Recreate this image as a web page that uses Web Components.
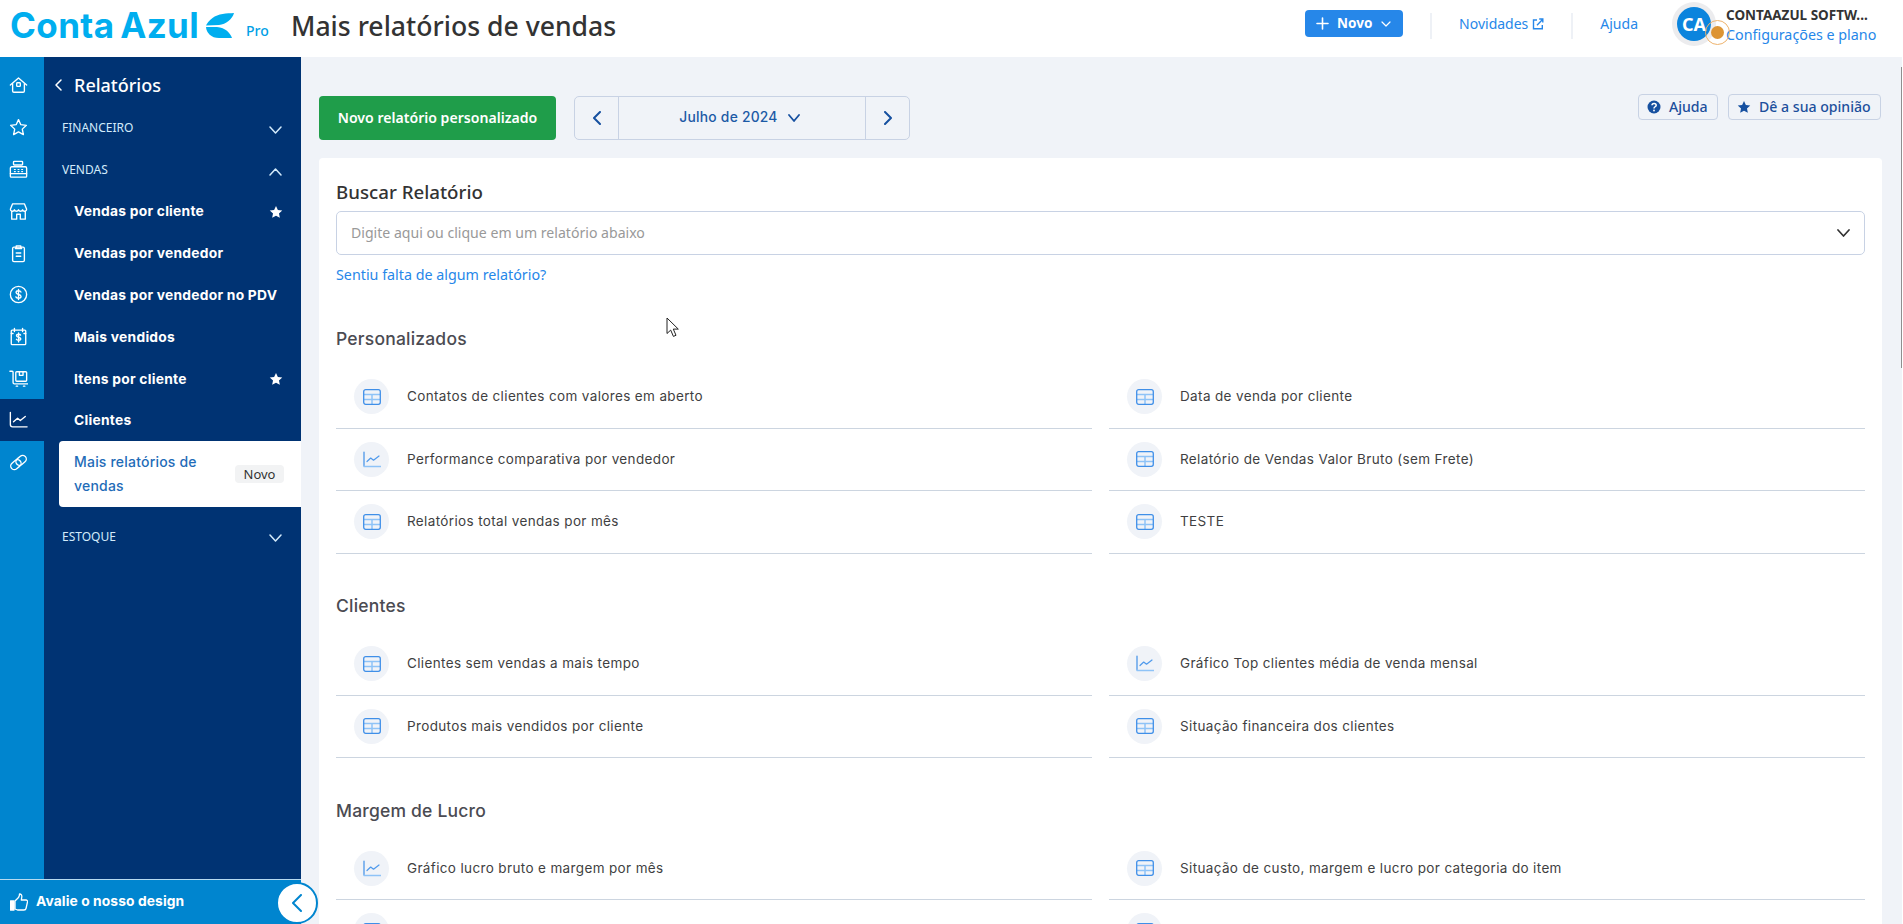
<!DOCTYPE html>
<html lang="pt-BR">
<head>
<meta charset="utf-8">
<title>Mais relatórios de vendas</title>
<style>
html,body{margin:0;padding:0;height:924px;overflow:hidden;background:#fff}
</style>
</head>
<body>
<ca-app>
  <ca-header slot="header"></ca-header>
  <ca-nav slot="nav"></ca-nav>
  <ca-main slot="main">
    <ca-report-section heading="Personalizados">
      <ca-report-item icon="table">Contatos de clientes com valores em aberto</ca-report-item>
      <ca-report-item icon="table">Data de venda por cliente</ca-report-item>
      <ca-report-item icon="chart">Performance comparativa por vendedor</ca-report-item>
      <ca-report-item icon="table">Relatório de Vendas Valor Bruto (sem Frete)</ca-report-item>
      <ca-report-item icon="table">Relatórios total vendas por mês</ca-report-item>
      <ca-report-item icon="table">TESTE</ca-report-item>
    </ca-report-section>
    <ca-report-section heading="Clientes">
      <ca-report-item icon="table">Clientes sem vendas a mais tempo</ca-report-item>
      <ca-report-item icon="chart">Gráfico Top clientes média de venda mensal</ca-report-item>
      <ca-report-item icon="table">Produtos mais vendidos por cliente</ca-report-item>
      <ca-report-item icon="table">Situação financeira dos clientes</ca-report-item>
    </ca-report-section>
    <ca-report-section heading="Margem de Lucro">
      <ca-report-item icon="chart">Gráfico lucro bruto e margem por mês</ca-report-item>
      <ca-report-item icon="table">Situação de custo, margem e lucro por categoria do item</ca-report-item>
      <ca-report-item icon="table"></ca-report-item>
      <ca-report-item icon="table"></ca-report-item>
    </ca-report-section>
  </ca-main>
</ca-app>
<script>
const UI = '"Noto Sans","Open Sans",sans-serif';
const GEO = 'Inter,"Open Sans",sans-serif';
const chev = (d, c, w=2, sz='12 7') => {
  const [a,b] = sz.split(' ');
  const paths = {down:`M1 1l${a/2-1} ${b-2}l${a/2-1} -${b-2}`, up:`M1 ${b-1}l${a/2-1} -${b-2}l${a/2-1} ${b-2}`};
  return `<svg width="${a}" height="${b}" viewBox="0 0 ${a} ${b}" fill="none" stroke="${c}" stroke-width="${w}" stroke-linecap="round" stroke-linejoin="round"><path d="${paths[d]}"/></svg>`;
};
const side = (d, c, w, h, sw=2) => `<svg width="${w}" height="${h}" viewBox="0 0 ${w} ${h}" fill="none" stroke="${c}" stroke-width="${sw}" stroke-linecap="round" stroke-linejoin="round"><path d="${d==='l'?`M${w-1} 1L1 ${h/2}L${w-1} ${h-1}`:`M1 1L${w-1} ${h/2}L1 ${h-1}`}"/></svg>`;
const star = (c,s) => `<svg width="${s}" height="${s}" viewBox="0 0 24 24" fill="${c}"><path d="M12 1.6l3.2 6.9 7.5.9-5.6 5.1 1.5 7.5L12 18.3 5.4 22l1.5-7.5L1.3 9.4l7.5-.9z"/></svg>`;
const railIcons = {
  home:'<path d="M1.500 10L10.500 2.200 19.500 10"/><path d="M4 8.500V16.500a1.500 1.500 0 0 0 1.500 1.500h10a1.500 1.500 0 0 0 1.500-1.500V8.500"/><rect x="8.500" y="7.500" width="4" height="4" rx=".8"/>',
  star:'<path d="M10.500 1.800l2.600 5.600 6.100.7-4.500 4.200 1.200 6.100-5.400-3-5.400 3 1.200-6.100L1.800 8.100l6.100-.7z"/>',
  register:'<rect x="5" y="1.500" width="10" height="4" rx=".8"/><path d="M3 7.500h15a1.500 1.500 0 0 1 1.500 1.500v6H1.500V9A1.500 1.500 0 0 1 3 7.500z"/><path d="M1.500 15v3a1 1 0 0 0 1 1h16a1 1 0 0 0 1-1v-3"/><path d="M6 10.500h1M10 10.500h1M14 10.500h1M6 12.800h1M10 12.800h1M14 12.800h1" stroke-width="1.300"/>',
  store:'<path d="M4 2h13l2.500 6a2.300 2.300 0 0 1-4.500.6 2.400 2.400 0 0 1-4.500 0 2.400 2.400 0 0 1-4.500 0A2.300 2.300 0 0 1 1.500 8z"/><path d="M3 10.500V19h5.500v-5.500h4V19H18v-8.500"/>',
  clip:'<rect x="4" y="3.500" width="13" height="16" rx="1.500"/><path d="M8 3.500V2h5v1.500l1 1.500H7z"/><path d="M8 10h5M8 13.500h5"/>',
  dollar:'<circle cx="10.500" cy="10.500" r="9"/><path d="M13.200 7.800c-.5-1-1.500-1.400-2.700-1.400-1.500 0-2.700.8-2.700 2 0 2.800 5.500 1.400 5.500 4.200 0 1.200-1.200 2-2.800 2-1.300 0-2.400-.5-2.900-1.500M10.500 5v11"/>',
  calendar:'<rect x="2.500" y="3.500" width="16" height="16" rx="1"/><path d="M6 1.500v3.500M15 1.500v3.500M2.500 7.200h2M16.500 7.200h2"/><path d="M12.800 9c-.4-.7-1.200-1-2.200-1-1.300 0-2.300.6-2.300 1.600 0 2.300 4.700 1.200 4.700 3.500 0 1-1 1.700-2.400 1.700-1.100 0-2-.4-2.400-1.200M10.600 6.500V16.500"/>',
  cart:'<path d="M1 2.500h2.500a1 1 0 0 1 1 1V15a1.500 1.500 0 0 0 1.500 1.500h14.500"/><rect x="7.500" y="3" width="12" height="10.500" rx="1"/><path d="M11.500 3v4h4V3"/><path d="M8 19h1.500M16 19h1.500"/>',
  chart:'<path d="M1.500 1.500V15a2.500 2.500 0 0 0 2.500 2.500h16"/><path d="M5 12l4.500-4 3 2.500L18 6"/>',
  link:'<g transform="rotate(-40 10.500 10.500)"><rect x="0.500" y="6.500" width="12.500" height="8" rx="4"/><rect x="8" y="6.500" width="12.500" height="8" rx="4"/></g>'
};
function def(name, css, html){
  class C extends HTMLElement{
    constructor(){
      super();
      this.attachShadow({mode:'open'});
      if(typeof html!=='function') this.shadowRoot.innerHTML = `<style>${css}</style>` + html;
    }
    connectedCallback(){ if(typeof html==='function'){ this.shadowRoot.innerHTML = `<style>${css}</style>` + html(this); } }
  }
  customElements.define(name,C);
}

def('ca-app', `
  :host{display:grid;grid-template-columns:301px 1fr;grid-template-rows:57px 867px;width:1903px;height:924px;position:relative;overflow:hidden;background:#fff}
  ::slotted([slot=header]){grid-column:1/3}
  .cursor{position:absolute;left:666px;top:317px;z-index:5}
`,`<slot name="header"></slot><slot name="nav"></slot><slot name="main"></slot>
<svg class="cursor" width="14" height="21" viewBox="0 0 14 21"><path d="M1 1v15.500l3.700-3.400 2.700 6.300 2.600-1.100-2.700-6.200h5z" fill="#fff" stroke="#222" stroke-width="1"/></svg>`);

def('ca-logo', `
  :host{display:flex;align-items:flex-start;width:268px;height:57px;padding-left:10px;box-sizing:border-box;flex:none;color:#00aeef}
  .word{font:700 35px/1 ${GEO};letter-spacing:.4px;word-spacing:-3px;margin-top:8px;white-space:pre;width:185px;flex:none}
  svg{margin:13px 0 0 11px;flex:none}
  .pro{font:500 14px/1 ${UI};margin:24px 0 0 12px;color:#00a0e6}
`,`<span class="word">Conta Azul</span>
<svg width="28" height="25" viewBox="0 0 28 25" fill="#00aeef"><path d="M28 0C21 .5 12 .5 6.500 5 3 7.800 .8 10.500 0 12.500L13 12C20 11.500 26.500 6 28 0z"/><path d="M0 14C.5 20 5 25 13 25L26 25C24 20 19.500 14.500 11 14z"/></svg>
<span class="pro">Pro</span>`);

def('ca-header', `
  :host{display:flex;align-items:center;height:57px;background:#fff;font-family:${UI}}
  h1{font:500 26.600px/1 ${UI};color:#333;margin:-5px 0 0 23px;white-space:nowrap}
  .right{margin-left:auto;display:flex;align-items:center;padding-right:22px}
  .novo{display:flex;align-items:center;width:98px;height:27px;box-sizing:border-box;background:#2687e9;border-radius:4px;color:#fff;font:700 13.500px/1 ${UI};padding-left:11px;margin-top:-10px}
  .novo .t{margin-left:8px}
  .novo svg:last-child{margin-left:9px}
  .sep{width:2px;height:26px;background:#eef1f6;margin:0 27px;flex:none;margin-top:-6px}
  .lnk{font:400 14px/1 ${UI};color:#2687e9;display:flex;align-items:center;gap:4px;white-space:nowrap;margin-top:-9px}
  .av{position:relative;width:44px;height:44px;border-radius:50%;background:#ececee;display:flex;align-items:center;justify-content:center;margin-left:34px;flex:none;margin-top:-9px}
  .av b{width:34px;height:34px;border-radius:50%;background:#0b84dd;color:#fff;font:700 18px/34px ${UI};text-align:center;display:block}
  .dot{position:absolute;left:39px;top:24px;width:13px;height:13px;border-radius:50%;background:#dd9433}
  .dot::after{content:"";position:absolute;left:-6px;top:-6px;width:25px;height:25px;border:1px solid #eeb36d;border-radius:50%;box-sizing:border-box}
  .who{width:155px;margin-left:10px;flex:none;margin-top:-8px}
  .who .n{font:700 13.500px/18px ${UI};color:#333;white-space:nowrap}
  .who .c{font:400 14.300px/18px ${UI};color:#2687e9;white-space:nowrap;margin-top:2px}
`,`<ca-logo></ca-logo><h1>Mais relatórios de vendas</h1>
<div class="right">
  <div class="novo"><svg width="13" height="13" viewBox="0 0 13 13" stroke="#fff" stroke-width="1.600" stroke-linecap="round"><path d="M6.500 1v11M1 6.500h11"/></svg><span class="t">Novo</span>${chev('down','#fff',1.2,'10 6')}</div>
  <div class="sep"></div>
  <div class="lnk">Novidades<svg width="12" height="12" viewBox="0 0 12 12" fill="none" stroke="#2687e9" stroke-width="1.400"><path d="M5 2H1.500v8.800h8.800V7"/><path d="M5 7.200L10.800 1.200M7.200 1h3.600v3.600"/></svg></div>
  <div class="sep"></div>
  <div class="lnk">Ajuda</div>
  <div class="av"><b>CA</b><span class="dot"></span></div>
  <div class="who"><div class="n">CONTAAZUL SOFTW...</div><div class="c">Configurações e plano</div></div>
</div>`);

def('ca-rail-item', `
  :host{display:flex;align-items:center;height:41.800px;width:44px;padding-left:8.500px;box-sizing:border-box}
  :host([active]){background:#003373}
  svg{display:block}
`, (el)=>`<svg width="19" height="19" viewBox="0 0 21 21" fill="none" stroke="#fff" stroke-width="1.500" stroke-linecap="round" stroke-linejoin="round">${railIcons[el.getAttribute('icon')]||''}</svg>`);

def('ca-rail', `
  :host{display:block;width:44px;flex:none;background:#0085cf;padding-top:8px;box-sizing:border-box}
`,`<slot></slot>`);

def('ca-side-group', `
  :host{display:flex;align-items:center;justify-content:space-between;height:41.800px;box-sizing:border-box;padding:2px 19px 0 18px;font:400 12px/1 ${UI};color:#d3ebfb}
  svg{margin-top:3px}
`, (el)=>`<slot></slot>${chev(el.hasAttribute('open')?'up':'down','#d3ebfb',1.500,'13 8')}`);

def('ca-side-item', `
  :host{display:flex;align-items:center;justify-content:space-between;height:41.800px;box-sizing:border-box;padding:2.500px 18px 0 30px;font:700 13.800px/1 ${GEO};color:#fff;white-space:nowrap;letter-spacing:.25px}
`, (el)=>`<span><slot></slot></span>${el.hasAttribute('star')?star('#fff',14):''}`);

def('ca-side-current', `
  :host{display:flex;align-items:center;justify-content:space-between;margin-left:15px;height:66px;background:#fff;border-radius:4px 0 0 4px;padding:0 17px 0 15px;box-sizing:border-box;font:500 14px/24px ${GEO};color:#1f6cb8;letter-spacing:.2px}
  .txt{width:150px}
  .tag{background:#f2f3f4;border-radius:4px;color:#333;font:400 13px/18px ${UI};width:49px;text-align:center;letter-spacing:0;flex:none}
`,`<span class="txt"><slot></slot></span><span class="tag">Novo</span>`);

def('ca-nav', `
  :host{display:flex;position:relative;height:867px;width:301px;z-index:3}
  .sub{flex:1;background:#003373;padding-top:7px;box-sizing:border-box}
  .back{display:flex;align-items:center;height:42.500px;padding-left:11px;font:500 18px/1 ${UI};color:#fff;margin-top:0}
  .back svg{margin-right:12px}
  ca-side-group[last]{margin-top:8px}
  .foot{position:absolute;left:0;bottom:0;width:301px;height:45px;box-sizing:border-box;background:#0085cf;border-top:1px solid #b6daf0;display:flex;align-items:center;padding-left:10px;gap:8px;color:#fff;font:700 13.800px/1 ${GEO};letter-spacing:.1px}
  .round{position:absolute;right:-17px;bottom:0;width:42px;height:42px;box-sizing:border-box;border-radius:50%;background:#fff;border:2px solid #0085cf;display:flex;align-items:center;justify-content:center}
`,`<ca-rail>
  <ca-rail-item icon="home"></ca-rail-item>
  <ca-rail-item icon="star"></ca-rail-item>
  <ca-rail-item icon="register"></ca-rail-item>
  <ca-rail-item icon="store"></ca-rail-item>
  <ca-rail-item icon="clip"></ca-rail-item>
  <ca-rail-item icon="dollar"></ca-rail-item>
  <ca-rail-item icon="calendar"></ca-rail-item>
  <ca-rail-item icon="cart"></ca-rail-item>
  <ca-rail-item icon="chart" active></ca-rail-item>
  <ca-rail-item icon="link"></ca-rail-item>
</ca-rail>
<div class="sub">
  <div class="back">${side('l','#fff',7,12,1.500)}Relatórios</div>
  <ca-side-group>FINANCEIRO</ca-side-group>
  <ca-side-group open>VENDAS</ca-side-group>
  <ca-side-item star>Vendas por cliente</ca-side-item>
  <ca-side-item>Vendas por vendedor</ca-side-item>
  <ca-side-item>Vendas por vendedor no PDV</ca-side-item>
  <ca-side-item>Mais vendidos</ca-side-item>
  <ca-side-item star>Itens por cliente</ca-side-item>
  <ca-side-item>Clientes</ca-side-item>
  <ca-side-current>Mais relatórios de vendas</ca-side-current>
  <ca-side-group last>ESTOQUE</ca-side-group>
</div>
<div class="foot">
  <svg width="18" height="18" viewBox="0 0 18 18" fill="none" stroke="#fff" stroke-width="1.300" stroke-linejoin="round"><path d="M0.500 8h3.500v9H0.500z" fill="#fff"/><path d="M5 8l3.500-3.500c.8-1 1-2.500 1-3.500 1.800 0 2.500 1.500 2.300 3L11.300 7H16c1 0 1.800 1 1.500 2l-1.500 6.500c-.2 1-1 1.500-2 1.500H7.500L5 16z"/></svg>
  <span>Avalie o nosso design</span>
  <div class="round">${side('l','#0085cf',10,18,2)}</div>
</div>`);

def('ca-toolbar', `
  :host{display:flex;align-items:flex-start;height:44px;font-family:${UI}}
  .green{width:237px;height:44px;border-radius:4px;background:#1f9d4a;color:#fff;font:600 14.100px/44px ${UI};text-align:center;flex:none}
  .date{display:flex;width:336px;height:44px;margin-left:18px;box-sizing:border-box;border:1px solid #c8d2e4;border-radius:5px;flex:none;color:#1c5aa6}
  .arrow{width:43px;display:flex;align-items:center;justify-content:center;flex:none}
  .mid{flex:1;border-left:1px solid #c8d2e4;border-right:1px solid #c8d2e4;display:flex;align-items:center;justify-content:center;gap:10px;font:500 13.800px/1 ${GEO};letter-spacing:.25px;padding-right:5px}
  .btns{margin-left:auto;display:flex;gap:10px;margin-top:-2px;margin-right:1px}
  .b{display:flex;align-items:center;height:26px;box-sizing:border-box;border:1px solid #c8d2e4;border-radius:4px;color:#1c4f9c;font:500 14.100px/1 ${UI};padding-left:8px;gap:8px;white-space:nowrap}
`,`<div class="green">Novo relatório personalizado</div>
<div class="date"><div class="arrow">${side('l','#1650a0',8,14)}</div><div class="mid"><span>Julho de 2024</span>${chev('down','#1650a0',1.800,'12 8')}</div><div class="arrow">${side('r','#1650a0',8,14)}</div></div>
<div class="btns">
  <div class="b" style="width:80px"><svg width="14" height="14" viewBox="0 0 14 14"><circle cx="7" cy="7" r="6.500" fill="#1650a0"/><path d="M5 5.300c0-1.200 1-1.900 2.100-1.900 1.200 0 2.100.8 2.100 1.800 0 1.600-2.200 1.500-2.200 3.200" fill="none" stroke="#fff" stroke-width="1.500"/><circle cx="7" cy="10.500" r=".9" fill="#fff"/></svg><span>Ajuda</span></div>
  <div class="b" style="width:153px">${star('#1650a0',14)}<span>Dê a sua opinião</span></div>
</div>`);

def('ca-search', `
  :host{display:block;padding-bottom:2.500px}
  h2{font:500 18.700px/24px ${UI};color:#333;margin:-1px 0 7px}
  .inp{display:flex;align-items:center;justify-content:space-between;height:44px;box-sizing:border-box;border:1px solid #c8d2e4;border-radius:5px;padding:0 14px 0 14px;font:400 14.100px/1 ${UI};color:#999}
  .lnk{font:400 14.300px/18px ${UI};color:#2687e9;margin-top:11px}
`,`<h2>Buscar Relatório</h2><div class="inp"><span>Digite aqui ou clique em um relatório abaixo</span>${chev('down','#333',1.700,'13 8')}</div><div class="lnk">Sentiu falta de algum relatório?</div>`);

const ICO = {
 table:`<svg width="18" height="16" viewBox="0 0 18 16" fill="none"><path d="M1 5.500h16M1 10.500h16M9 5.500V15" stroke="#8ec3f7" stroke-width="1.500"/><rect x=".7" y=".7" width="16.600" height="14.600" rx="2" stroke="#3f8fe8" stroke-width="1.300"/></svg>`,
 chart:`<svg width="18" height="17" viewBox="0 0 18 17" fill="none" stroke-linecap="round" stroke-linejoin="round"><path d="M1 1v13.500" stroke="#3f8fe8" stroke-width="1.200"/><path d="M1 15.500h16.500" stroke="#8ec3f7" stroke-width="1.600"/><path d="M4 10.500l3.700-3.500 2.800 2.200L16 5" stroke="#4f9aec" stroke-width="1.200"/></svg>`
};
def('ca-report-item', `
  :host{display:flex;align-items:center;height:62.500px;box-sizing:border-box;border-bottom:1px solid #ccd5e0;padding-left:18px;font:400 13.500px/1 ${GEO};color:#3f3f42;letter-spacing:.36px;white-space:nowrap}
  .c{width:35px;height:35px;border-radius:50%;background:#f0f3f8;display:flex;align-items:center;justify-content:center;margin-right:18px;flex:none}
`,(el)=>`<span class="c">${ICO[el.getAttribute('icon')]}</span><span><slot></slot></span>`);

def('ca-report-section', `
  :host{display:block;margin-top:40.500px}
  h3{font:500 17.500px/24px ${GEO};color:#4b4b52;margin:0 0 15px;letter-spacing:.2px}
  .g{display:grid;grid-template-columns:756px 756px;column-gap:17px}
`,(el)=>`<h3>${el.getAttribute('heading')}</h3><div class="g"><slot></slot></div>`);

def('ca-main', `
  :host{display:block;background:#f0f3f8;height:867px;overflow:hidden;position:relative;margin-right:1px;padding:39px 20px 0 18px;box-sizing:border-box}
  .card{margin-top:18px;background:#fff;border-radius:4px 4px 0 0;padding:23px 17px 0 17px;height:767px;box-sizing:border-box;overflow:hidden}
  .sb{position:absolute;right:0;top:10px;width:1px;height:301px;background:#8f8f8f}
`,`<ca-toolbar></ca-toolbar><div class="card"><ca-search></ca-search><slot></slot></div><div class="sb"></div>`);
</script>
</body>
</html>
